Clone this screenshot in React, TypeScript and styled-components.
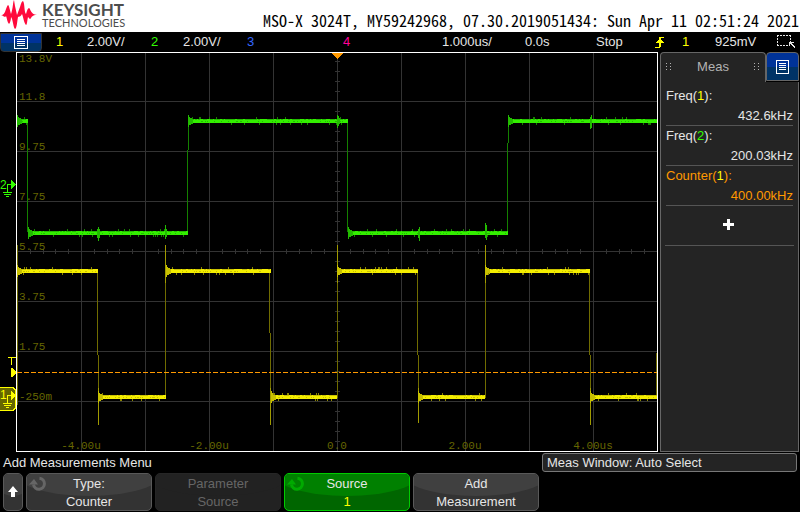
import React from 'react';
import styled, { createGlobalStyle, css } from 'styled-components';

const GlobalStyle = createGlobalStyle`
  * { box-sizing: border-box; }
  html, body, #root { height: 100%; }
  body {
    margin: 0;
    background: #000;
    color: #e6e6e6;
    font: 13px/18px 'Liberation Sans', Arial, sans-serif;
  }
  button { font: inherit; color: inherit; cursor: pointer; }
`;

const colors = {
  ch1: '#ffff00',
  ch2: '#33ff00',
  ch3: '#3366ff',
  ch4: '#ff0099',
  amber: '#ff9900',
  edge: '#666666',
  panel: '#242424',
};

/* ---------- page frame ---------- */

const Screen = styled.div`
  display: flex;
  flex-direction: column;
  min-height: 100%;
`;

const Header = styled.header`
  display: flex;
  justify-content: space-between;
  align-items: flex-start;
  height: 32px;
  background: #fff;
  color: #000;
`;

const Brand = styled.div`
  display: flex;
  gap: 5px;
  padding: 0 0 0 1px;
  color: #4d4d4d;
`;

const BrandName = styled.div`
  display: flex;
  flex-direction: column;
`;

const BrandMain = styled.strong`
  font: bold 17px/20px Lato, 'Liberation Sans', sans-serif;
`;

const BrandSub = styled.span`
  font: 11px/6px Lato, 'Liberation Sans', sans-serif;
`;

const SystemLine = styled.div`
  padding: 10px 1px 0 0;
  font: 16px/20px 'Noto Sans Mono CJK SC', 'Liberation Mono', monospace;
  white-space: pre;
`;

const StatusBar = styled.div`
  display: flex;
  align-items: center;
  height: 20px;
  white-space: nowrap;
`;

const Cell = styled.span<{ $w: number; $tone?: string; $grow?: boolean }>`
  flex: ${(p) => (p.$grow ? `1 0 ${p.$w}px` : `0 0 ${p.$w}px`)};
  display: flex;
  color: ${(p) => p.$tone ?? 'inherit'};
`;

const MenuButton = styled.button<{ $tab?: boolean }>`
  display: flex;
  align-items: center;
  justify-content: center;
  flex: none;
  width: ${(p) => (p.$tab ? 33 : 42)}px;
  height: ${(p) => (p.$tab ? 29 : 19)}px;
  padding: 0;
  border: 1px solid ${(p) => (p.$tab ? colors.edge : '#333')};
  border-radius: ${(p) => (p.$tab ? '4px 4px 0 0' : '0 0 4px 4px')};
  background: linear-gradient(#003399 0 52%, #003366 52%);
`;

const Main = styled.main`
  display: flex;
  flex: 1;
  min-height: 400px;
`;

const Gutter = styled.div`
  flex: none;
  width: 16px;
  position: relative;
`;

const Marker = styled.svg<{ $top: number }>`
  position: absolute;
  left: 0;
  top: ${(p) => p.$top}%;
`;

const Plot = styled.section`
  flex: 1;
  position: relative;
  display: flex;
  border: 1px solid #fff;
`;

const PlotDrawing = styled.svg`
  flex: 1;
  width: 100%;
  height: 100%;
  min-width: 0;
`;

const axisText = css`
  color: #666600;
  font: 11px/12px 'Liberation Mono', monospace;
`;

const YAxis = styled.div`
  ${axisText}
  position: absolute;
  inset: 0;
  display: grid;
  grid-template-rows: repeat(7, 50fr) 48fr;
  padding-left: 2px;
`;

const YCell = styled.div`
  display: flex;
  flex-direction: column;
  justify-content: flex-end;
`;

const YTop = styled.span`
  margin-bottom: auto;
`;

const XAxis = styled.div`
  ${axisText}
  position: absolute;
  left: 0;
  right: 0;
  bottom: 0;
  display: grid;
  grid-template-columns: repeat(5, 1fr);
  line-height: 10px;
  text-align: center;
`;

/* ---------- measurement panel ---------- */

const Side = styled.aside`
  flex: none;
  width: 139px;
  margin: 0 1px 0 2px;
  display: flex;
  flex-direction: column;
`;

const TabRow = styled.div`
  display: flex;
  justify-content: space-between;
`;

const Tab = styled.h2`
  flex: 1;
  display: flex;
  align-items: center;
  justify-content: space-between;
  margin: 0;
  padding: 0 5px 2px;
  height: 30px;
  border: solid ${colors.edge};
  border-width: 1px 1px 0;
  border-radius: 4px 4px 0 0;
  background: ${colors.panel};
  color: #b3b3b3;
  font-size: 13px;
  font-weight: normal;
`;

const SideBody = styled.div`
  flex: 1;
  padding: 4px 4px;
  border: solid ${colors.edge};
  border-width: 0 1px 1px;
  background: ${colors.panel};
`;

const Measure = styled.div<{ $tone?: string }>`
  display: flex;
  flex-direction: column;
  height: 40px;
  margin: 0 1px;
  padding-top: 1px;
  border-bottom: 1px solid #555;
  color: ${(p) => p.$tone ?? 'inherit'};
`;

const Value = styled.span`
  text-align: right;
  line-height: 22px;
`;

const Tint = styled.span<{ $tone: string }>`
  color: ${(p) => p.$tone};
`;

const AddButton = styled.button`
  display: flex;
  align-items: center;
  justify-content: center;
  width: 100%;
  height: 40px;
  padding: 0 2px 2px 0;
  border: 0;
  border-bottom: 1px solid #555;
  background: none;
`;

/* ---------- bottom menu ---------- */

const Footer = styled.footer`
  display: grid;
  gap: 1px;
  padding-bottom: 1px;
`;

const InfoRow = styled.div`
  display: flex;
  justify-content: space-between;
  align-items: center;
  padding: 0 3px;
  height: 20px;
`;

const MenuTitle = styled.h1`
  margin: 0;
  padding-top: 2px;
  font-size: 13px;
  font-weight: normal;
`;

const MeasWindow = styled.div`
  width: 255px;
  height: 19px;
  padding-left: 4px;
  border: 1px solid #777;
  border-radius: 3px;
  background: ${colors.panel};
  line-height: 17px;
`;

const SoftKeys = styled.nav`
  display: flex;
  gap: 3px;
  padding: 0 3px;
`;

const SoftKey = styled.button<{ $kind?: 'active' | 'disabled'; $narrow?: boolean }>`
  position: relative;
  overflow: hidden;
  isolation: isolate;
  display: flex;
  flex-direction: column;
  align-items: center;
  justify-content: center;
  width: ${(p) => (p.$narrow ? 20 : 126)}px;
  height: 38px;
  padding: ${(p) => (p.$narrow ? 0 : 2)}px 0 0;
  border: 1px solid #595959;
  border-radius: 5px;
  background: #333;

  &::before {
    content: '';
    position: absolute;
    z-index: -1;
    left: -12px;
    right: -12px;
    top: -24px;
    height: 46px;
    border-radius: 50%;
    background: #404040;
  }

  ${(p) =>
    p.$kind === 'active' &&
    css`
      border-color: #00cc00;
      background: #006600;
      &::before { background: #008000; }
    `}
  ${(p) =>
    p.$kind === 'disabled' &&
    css`
      border-color: #262626;
      background: #222;
      color: #666;
      &::before { background: #222; }
    `}
`;

const KnobIcon = styled.svg`
  position: absolute;
  left: 2px;
  top: 2px;
`;

/* ---------- icons ---------- */

const ListIcon = () => (
  <svg width="14" height="13" viewBox="0 0 14 13" fill="none" stroke="#fff" shapeRendering="crispEdges">
    <path d="M.5.5h13v12H.5zM3 3.5h8M3 5.5h8M3 7.5h8M3 9.5h8" />
  </svg>
);

const TallListIcon = () => (
  <svg width="13" height="14" viewBox="0 0 13 14" fill="none" stroke="#fff" shapeRendering="crispEdges">
    <path d="M.5.5h12v13H.5zM3 3.5h7M3 5.5h7M3 7.5h7M3 9.5h7" />
  </svg>
);

const Logo = () => (
  <svg width="36" height="30" viewBox="0 0 36 30" fill="#ff0a3c">
    <path d="M0 15C3 15 3 13 4 12C5 9 6 6 7 5C8 5 9 11 10 14C12 9 12 1 13 0L14 6L16 15L19 7C20 3 21 1 22 1C24 4 23 12 25 14C26 10 27 8 28 8C30 9 29 14 36 15C31 15 31 17 30 18C29 20 28 18 27 17C26 22 26 25 25 25C23 23 22 16 21 14C19 18 18 16 17 17C16 22 16 28 14 29C12 27 12 19 10 17C10 20 9 23 8 24C6 22 6 18 5 16C4 18 3 16 0 15Z" />
  </svg>
);

const GripIcon = () => (
  <svg width="6" height="8" viewBox="0 0 6 8" fill="#b3b3b3" shapeRendering="crispEdges">
    <path d="M0 0h1v1H0zM4 0h1v1H4zM0 3h1v1H0zM4 3h1v1H4zM0 6h1v1H0zM4 6h1v1H4z" />
  </svg>
);

const Knob = ({ color }: { color: string }) => (
  <KnobIcon width="18" height="16" viewBox="0 0 18 16" fill="none" stroke={color} strokeWidth="3">
    <path d="M10.500 2.200a5.500 5.500 0 1 1-6 6.300" />
    <path d="M0 8.500h9L5 3z" fill={color} stroke="none" />
  </KnobIcon>
);

/* ---------- waveforms ---------- */

const W = 640;
const H = 398;

/* Small repeatable pseudo-random source for trace noise. */
const makeNoise = (seed: number) => () => {
  seed = (seed * 1103515245 + 12345) % 2147483648;
  return seed / 2147483648;
};

type Segment = { from: number; to: number; y: number };

const ch2Segments: Segment[] = [
  { from: 0, to: 11, y: 68 },
  { from: 11, to: 171, y: 180 },
  { from: 171, to: 331, y: 68 },
  { from: 331, to: 491, y: 180 },
  { from: 491, to: 640, y: 68 },
];

const ch1Segments: Segment[] = [
  { from: 0, to: 81, y: 218 },
  { from: 81, to: 149, y: 344 },
  { from: 149, to: 254, y: 218 },
  { from: 254, to: 320, y: 344 },
  { from: 320, to: 401, y: 218 },
  { from: 401, to: 468, y: 344 },
  { from: 468, to: 573, y: 218 },
  { from: 573, to: 640, y: 344 },
];

const noisePath = (segments: Segment[], seed: number) => {
  const rand = makeNoise(seed);
  let spikes = '';
  let grain = '';
  segments.forEach(({ from, to, y }) => {
    for (let x = from + 2; x < to - 1; x += 1) {
      const r = rand();
      if (r < 0.05) spikes += `M${x} ${y - 4}h1v2h-1z`;
      else if (r < 0.13) spikes += `M${x} ${y + 2}h1v2h-1z`;
      if (rand() < 0.4) grain += `M${x} ${y - 2}h2v1h-2z`;
      if (rand() < 0.2) grain += `M${x} ${y}h1v1h-1z`;
    }
  });
  return { spikes, grain };
};

const Trace = ({ segments, bright, mid, dim, seed }: {
  segments: Segment[]; bright: string; mid: string; dim: string; seed: number;
}) => {
  const { spikes, grain } = noisePath(segments, seed);
  return (
    <g>
      {segments.map((s) => (
        <g key={s.from}>
          <rect x={s.from} y={s.y - 2} width={s.to - s.from} height={4} fill={bright} />
          <path d={`M${s.from} ${s.y - 6}h1v2h1v1h2v1h1v5h-2v1h-2v2h-1z`} fill={mid} />
        </g>
      ))}
      <path d={grain} fill={mid} />
      <path d={spikes} fill={dim} />
    </g>
  );
};

const gridPath = () => {
  let d = '';
  for (let i = 1; i < 10; i += 1) d += `M${i * 64} 0h1v${H}h-1z`;
  for (let i = 1; i < 8; i += 1) d += `M0 ${i * 50 - 2}h${W}v1H0z`;
  for (let i = 1; i < 50; i += 1) d += `M${Math.round(i * 12.8)} 196h1v5h-1z`;
  for (let i = 1; i < 40; i += 1) d += `M318 ${i * 10 - 2}h5v1h-5z`;
  return d;
};

const Waveforms = () => (
  <PlotDrawing viewBox={`0 0 ${W} ${H}`} preserveAspectRatio="none" shapeRendering="crispEdges" role="img" aria-label="Channel 1 and channel 2 waveforms">
    <path d={gridPath()} fill="#333" />
    <path d="M10 69h1v110h-1zM171 69h1v28h-1zM170 97h1v83h-1zM330 69h1v110h-1zM491 69h1v21h-1zM490 90h1v90h-1z" fill="#148000" />
    <path d="M0 192h1v160h-1zM80 218h1v84h-1zM81 302h1v70h-1zM148 192h1v153h-1zM252 218h1v62h-1zM253 280h1v92h-1zM320 192h1v153h-1zM400 218h1v84h-1zM401 302h1v68h-1zM468 192h1v153h-1zM572 218h1v84h-1zM573 302h1v70h-1zM639 300h1v46h-1z" fill="#706c00" />
    <path d="M81 335h1v37h-1zM148 192h1v38h-1zM253 335h1v37h-1zM320 192h1v38h-1zM401 335h1v35h-1zM468 192h1v38h-1zM573 335h1v37h-1z" fill="#a09a00" />
    <Trace segments={ch2Segments} bright="#33ee00" mid="#22bb00" dim="#168000" seed={7} />
    <path d="M80 176h1v9h-1zM81 174h1v14h-1zM82 176h1v9h-1zM148 172h1v14h-1zM149 176h1v8h-1zM320 62h1v13h-1zM321 63h1v10h-1zM322 65h1v6h-1zM401 176h1v9h-1zM402 174h1v14h-1zM468 170h1v15h-1zM469 172h1v15h-1zM573 64h1v12h-1zM574 62h1v13h-1z" fill="#22bb00" />
    <Trace segments={ch1Segments} bright="#f4ee00" mid="#c8c000" dim="#8a8500" seed={31} />
    <path d="M0 319.500h640" stroke={colors.amber} strokeDasharray="5 2" />
    <path d="M315 0h11v1h-1v1h-1v1h-1v1h-1v1h-1v1h-1v-1h-1v-1h-1v-1h-1v-1h-1v-1h-1z" fill={colors.amber} />
  </PlotDrawing>
);

const yLabels = ['11.8', '9.75', '7.75', '5.75', '3.75', '1.75', '-250m', ''];
const xLabels = ['-4.00u', '-2.00u', '0.0', '2.00u', '4.00us'];

const measurements = [
  { name: 'Freq', channel: '1', tint: colors.ch1, value: '432.6kHz' },
  { name: 'Freq', channel: '2', tint: colors.ch2, value: '200.03kHz' },
  { name: 'Counter', channel: '1', tint: colors.ch1, value: '400.00kHz', tone: colors.amber },
];

export default function App() {
  return (
    <Screen>
      <GlobalStyle />
      <Header>
        <Brand>
          <Logo />
          <BrandName>
            <BrandMain>KEYSIGHT</BrandMain>
            <BrandSub>TECHNOLOGIES</BrandSub>
          </BrandName>
        </Brand>
        <SystemLine>MSO-X 3024T, MY59242968, 07.30.2019051434: Sun Apr 11 02:51:24 2021</SystemLine>
      </Header>

      <StatusBar>
        <Cell $w={56}>
          <MenuButton aria-label="Main menu"><ListIcon /></MenuButton>
        </Cell>
        <Cell $w={31} $tone={colors.ch1}>1</Cell>
        <Cell $w={64}>2.00V/</Cell>
        <Cell $w={32} $tone={colors.ch2}>2</Cell>
        <Cell $w={64}>2.00V/</Cell>
        <Cell $w={96} $tone={colors.ch3}>3</Cell>
        <Cell $w={99} $tone={colors.ch4} $grow>4</Cell>
        <Cell $w={83}>1.000us/</Cell>
        <Cell $w={71}>0.0s</Cell>
        <Cell $w={59}>Stop</Cell>
        <Cell $w={27}>
          <svg width="10" height="13" viewBox="0 0 10 13" fill={colors.ch1} shapeRendering="crispEdges" role="img" aria-label="Rising edge trigger">
            <path d="M0 11h4V1h5v1H6v9H5v1H0zM5 3h1v1h1v1h1v1h1v1H1V6h1V5h1V4h2z" />
          </svg>
        </Cell>
        <Cell $w={33} $tone={colors.ch1}>1</Cell>
        <Cell $w={61}>925mV</Cell>
        <Cell $w={24}>
          <svg width="19" height="16" viewBox="0 0 19 16" fill="none" stroke="#e6e6e6" shapeRendering="crispEdges" role="img" aria-label="Zone select">
            <path d="M1 1.500h14M1 11.500h11M1.500 1v11M14.500 1v7" strokeDasharray="2 1" />
            <path d="M13 8h5v1h-2v1h1v1h1v1h1v2h-1v-1h-1v-1h-1v-1h-1v-1h-1v2h-1z" fill="#e6e6e6" stroke="none" />
          </svg>
        </Cell>
      </StatusBar>

      <Main>
        <Gutter>
          <Marker $top={32} width="16" height="18" viewBox="0 0 16 18" fill={colors.ch2} shapeRendering="crispEdges">
            <text x="0" y="9" fontSize="12" fontFamily="Liberation Sans">2</text>
            <path d="M7 4h4V0l5 4v1l-5 4V5H8v7h4v1H3v-1h4zM4 14h7v1H4zM6 16h3v1H6z" />
          </Marker>
          <Marker $top={76} width="16" height="22" viewBox="0 0 16 22" fill={colors.ch1} shapeRendering="crispEdges">
            <path d="M8 1h8v1h-4v7h-1V2H8zM11 12h1l4 4v1l-4 4h-1z" />
          </Marker>
          <Marker $top={83.75} width="16" height="24" viewBox="0 0 16 24" fill={colors.ch1} shapeRendering="crispEdges">
            <path d="M-1 .5h14l2.500 2.500v18L13 23.500H-1z" fill="#666600" stroke={colors.ch1} />
            <text x="0" y="12" fontSize="12" fontFamily="Liberation Sans">1</text>
            <path d="M7 8h4V4l5 4v1l-5 4V9H8v7h4v1H3v-1h4zM4 18h7v1H4zM6 20h3v1H6z" />
          </Marker>
        </Gutter>
        <Plot>
          <Waveforms />
          <YAxis>
            {yLabels.map((label, i) => (
              <YCell key={label}>
                {i === 0 && <YTop>13.8V</YTop>}
                {label}
              </YCell>
            ))}
          </YAxis>
          <XAxis>
            {xLabels.map((label) => <span key={label}>{label}</span>)}
          </XAxis>
        </Plot>
        <Side>
          <TabRow>
            <Tab><GripIcon />Meas<GripIcon /></Tab>
            <MenuButton $tab aria-label="Measurement menu"><TallListIcon /></MenuButton>
          </TabRow>
          <SideBody>
            {measurements.map((m) => (
              <Measure key={m.name + m.channel} $tone={m.tone}>
                <span>{m.name}(<Tint $tone={m.tint}>{m.channel}</Tint>):</span>
                <Value>{m.value}</Value>
              </Measure>
            ))}
            <AddButton aria-label="Add measurement">
              <svg width="11" height="11" viewBox="0 0 11 11" fill="#fff"><path d="M4 0h3v4h4v3H7v4H4V7H0V4h4z" /></svg>
            </AddButton>
          </SideBody>
        </Side>
      </Main>

      <Footer>
        <InfoRow>
          <MenuTitle>Add Measurements Menu</MenuTitle>
          <MeasWindow>Meas Window: Auto Select</MeasWindow>
        </InfoRow>
        <SoftKeys>
          <SoftKey $narrow aria-label="Back">
            <svg width="10" height="12" viewBox="0 0 10 12" fill="#fff"><path d="M5 0l5 6H7v5H3V6H0z" /></svg>
          </SoftKey>
          <SoftKey><Knob color="#666" /><span>Type:</span><span>Counter</span></SoftKey>
          <SoftKey $kind="disabled" disabled><span>Parameter</span><span>Source</span></SoftKey>
          <SoftKey $kind="active"><Knob color="#00aa00" /><span>Source</span><Tint $tone={colors.ch1}>1</Tint></SoftKey>
          <SoftKey><span>Add</span><span>Measurement</span></SoftKey>
        </SoftKeys>
      </Footer>
    </Screen>
  );
}
